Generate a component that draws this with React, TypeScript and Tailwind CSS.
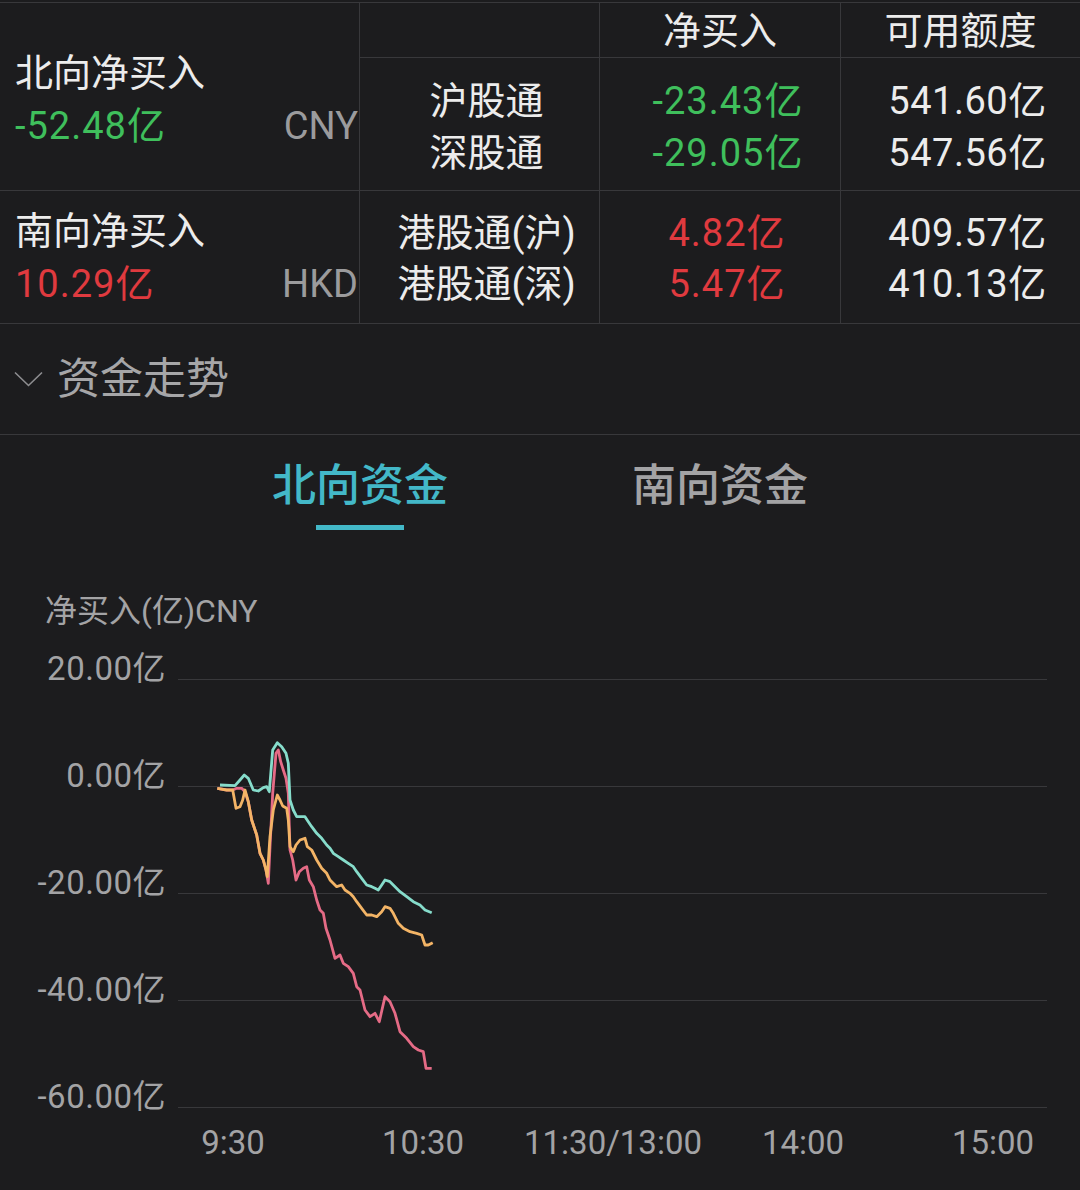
import React from 'react';

const font = "font-['Roboto','Noto_Sans_CJK_SC',sans-serif]";

// chart points traced at 3x from the plot area (origin 190,720)
const teal: number[][] = [
  [90, 195], [135, 197], [150, 180], [163, 165], [175, 175], [190, 210], [205, 213], [220, 203], [230, 200],
  [238, 215], [248, 90], [262, 68], [275, 80], [288, 100], [295, 130], [300, 240], [310, 270], [320, 290],
  [345, 290], [355, 305], [365, 320], [380, 340], [395, 355], [410, 375], [420, 385], [430, 400], [445, 410],
  [460, 420], [475, 430], [490, 440], [500, 455], [515, 475], [530, 495], [545, 500], [555, 505], [565, 510],
  [575, 495], [585, 480], [600, 485], [615, 500], [630, 515], [650, 530], [670, 545], [690, 555], [705, 570],
  [725, 578],
];

const orange: number[][] = [
  [82, 205], [110, 210], [128, 210], [138, 265], [150, 260], [158, 240], [165, 210], [175, 245], [185, 300],
  [200, 345], [210, 400], [220, 420], [228, 450], [232, 470], [240, 350], [250, 270], [262, 225], [270, 240],
  [278, 258], [290, 265], [295, 300], [300, 380], [310, 395], [318, 375], [330, 360], [345, 355], [352, 380],
  [365, 390], [380, 420], [395, 445], [410, 460], [420, 480], [440, 500], [455, 495], [465, 510], [480, 520],
  [490, 530], [500, 545], [515, 565], [530, 585], [545, 585], [560, 590], [575, 575], [585, 560], [600, 565],
  [610, 580], [625, 610], [640, 625], [660, 635], [680, 640], [695, 645], [705, 675], [715, 675], [728, 668],
];

const pink: number[][] = [
  [82, 205], [110, 210], [128, 210], [140, 205], [155, 205], [165, 215], [175, 245], [185, 300], [200, 345],
  [210, 400], [220, 420], [228, 450], [235, 490], [240, 380], [248, 220], [258, 100], [265, 90], [272, 125],
  [280, 150], [288, 175], [295, 220], [300, 390], [308, 420], [318, 480], [328, 455], [340, 445], [350, 440],
  [358, 480], [370, 500], [380, 540], [390, 570], [400, 580], [408, 625], [420, 660], [435, 715], [450, 705],
  [460, 730], [475, 740], [490, 760], [500, 800], [510, 810], [525, 870], [540, 890], [555, 880], [568, 905],
  [578, 860], [585, 830], [600, 845], [615, 880], [630, 935], [650, 955], [670, 980], [685, 990], [700, 995],
  [708, 1045], [725, 1045],
];

const toPoints = (pts: number[][]) =>
  pts.map(([x, y]) => `${(190 + x / 3).toFixed(1)},${(720 + y / 3).toFixed(1)}`).join(' ');

const yTicks = ['20.00亿', '0.00亿', '-20.00亿', '-40.00亿', '-60.00亿'];
const xTicks = ['9:30', '10:30', '11:30/13:00', '14:00', '15:00'];

const cell = 'border-[#38383b]';

export default function App() {
  return (
    <div className={`w-[1080px] h-[1190px] bg-[#1c1c1e] overflow-hidden pt-[2px] ${font}`}>
      {/* summary table */}
      <div className={`grid grid-cols-[360px_240px_241px_239px] grid-rows-[55px_133px_133px] border-t ${cell} text-[38px] text-[#ececec]`}>
        <div className={`row-span-2 border-r border-b ${cell} pl-[15px] pr-[1px] pt-[44px] leading-[53px]`}>
          <div>北向净买入</div>
          <div className="flex justify-between">
            <span className="text-[#3fbf5c] tracking-[1px]">-52.48亿</span>
            <span className="text-[#9b9b9d]">CNY</span>
          </div>
        </div>
        <div className={`border-r border-b ${cell}`} />
        <div className={`border-r border-b ${cell} text-center leading-[52px] pt-[2px]`}>净买入</div>
        <div className={`border-b ${cell} text-center leading-[52px] pt-[2px]`}>可用额度</div>

        <div className={`border-r border-b ${cell} text-center pl-[14px] pt-[17px] leading-[52px]`}>
          <div>沪股通</div>
          <div>深股通</div>
        </div>
        <div className={`border-r border-b ${cell} text-center pl-[16px] pt-[17px] leading-[52px] tracking-[1px] text-[#3fbf5c]`}>
          <div>-23.43亿</div>
          <div>-29.05亿</div>
        </div>
        <div className={`border-b ${cell} text-center pl-[14px] pt-[17px] leading-[52px] tracking-[0.5px]`}>
          <div>541.60亿</div>
          <div>547.56亿</div>
        </div>

        <div className={`border-r border-b ${cell} pl-[15px] pr-[1px] pt-[14px] leading-[53px]`}>
          <div>南向净买入</div>
          <div className="flex justify-between">
            <span className="text-[#e03a3f] tracking-[1px]">10.29亿</span>
            <span className="text-[#9b9b9d]">HKD</span>
          </div>
        </div>
        <div className={`border-r border-b ${cell} text-center pl-[14px] pt-[17px] leading-[51px]`}>
          <div>港股通(沪)</div>
          <div>港股通(深)</div>
        </div>
        <div className={`border-r border-b ${cell} text-center pl-[14px] pt-[17px] leading-[51px] tracking-[1px] text-[#e03a3f]`}>
          <div>4.82亿</div>
          <div>5.47亿</div>
        </div>
        <div className={`border-b ${cell} text-center pl-[14px] pt-[17px] leading-[51px] tracking-[0.5px]`}>
          <div>409.57亿</div>
          <div>410.13亿</div>
        </div>
      </div>

      {/* section header */}
      <div className={`h-[111px] border-b ${cell} flex items-center pl-[14px] gap-[14px]`}>
        <svg width="29" height="16" viewBox="0 0 29 16" fill="none">
          <polyline points="1,1.5 14.5,14.5 28,1.5" stroke="#8d8d90" strokeWidth="1.6" />
        </svg>
        <span className="text-[43px] text-[#a6a6a8] leading-none">资金走势</span>
      </div>

      {/* tabs */}
      <div className="flex pl-[180px] pt-[24px]">
        <div className="w-[360px] flex flex-col items-center">
          <span className="text-[44px] leading-[55px] font-medium text-[#43b8c8]">北向资金</span>
          <div className="mt-[11px] w-[88px] h-[5px] bg-[#43b8c8]" />
        </div>
        <div className="w-[360px] flex flex-col items-center">
          <span className="text-[44px] leading-[55px] font-medium text-[#a3a3a5]">南向资金</span>
        </div>
      </div>

      {/* chart */}
      <div className="mt-[60px] pl-[45px] text-[32px] leading-[42px] text-[#a3a3a5]">净买入(亿)CNY</div>

      <div className="relative mt-[28px]">
        <div className="flex flex-col gap-[87px] pr-[33px]">
          {yTicks.map((t) => (
            <div key={t} className="flex items-end h-[20px]">
              <span className="w-[166px] text-right text-[33px] leading-[20px] text-[#a3a3a5] pb-[1px] tracking-[0.5px]">{t}</span>
              <div className="flex-1 h-px bg-[#38383b] ml-[12px]" />
            </div>
          ))}
        </div>
        <svg
          className="absolute left-0 top-0 pointer-events-none"
          width="1080"
          height="448"
          viewBox="0 660 1080 448"
          fill="none"
        >
          <polyline points={toPoints(pink)} stroke="#e56b86" strokeWidth="2.8" strokeLinejoin="round" />
          <polyline points={toPoints(orange)} stroke="#f3b466" strokeWidth="2.8" strokeLinejoin="round" />
          <polyline points={toPoints(teal)} stroke="#86dccb" strokeWidth="2.8" strokeLinejoin="round" />
        </svg>
      </div>

      <div className="flex pl-[138px] mt-[15px] text-[33px] leading-[40px] text-[#a3a3a5]">
        {xTicks.map((t) => (
          <div key={t} className="w-[190px] shrink-0 text-center">{t}</div>
        ))}
      </div>
    </div>
  );
}
